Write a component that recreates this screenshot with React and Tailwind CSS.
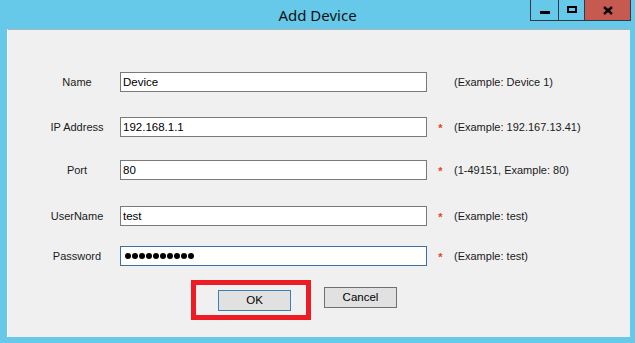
import React from 'react';

const fields = [
  { label: 'Name', value: 'Device', hint: '(Example: Device 1)', required: false, mt: 'mt-[42px]' },
  { label: 'IP Address', value: '192.168.1.1', hint: '(Example: 192.167.13.41)', required: true, mt: 'mt-[25px]' },
  { label: 'Port', value: '80', hint: '(1-49151, Example: 80)', required: true, mt: 'mt-[23px]' },
  { label: 'UserName', value: 'test', hint: '(Example: test)', required: true, mt: 'mt-[26px]' },
];

const Row = ({ label, required, hint, mt, children }) => (
  <div className={`flex items-center h-[20px] ${mt}`}>
    <div className="w-[86px] text-center text-[11px] text-[#1a1a1a]">{label}</div>
    {children}
    <div className="w-[27px] text-center text-[11px] text-[#e8401c] font-bold leading-none pt-[3px]">
      {required ? '*' : ''}
    </div>
    <div className="text-[11px] text-[#1a1a1a]">{hint}</div>
  </div>
);

const App = () => {
  return (
    <div
      className="w-[635px] h-[343px] bg-[#66c9ea] flex flex-col overflow-hidden"
      style={{ fontFamily: '"Liberation Sans", Arial, sans-serif' }}
    >
      {/* title bar */}
      <div className="h-[29px] grid grid-cols-[1fr_auto_1fr]">
        <div />
        <div
          className="text-[15px] text-[#111] leading-[29px] pt-[1px]"
          style={{ fontFamily: '"Noto Sans", sans-serif' }}
        >
          Add Device
        </div>
        <div className="flex justify-end items-start pr-[4px]">
          <div className="flex h-[21px] border border-t-0 border-[#2f3b47]">
            <button className="w-[27px] h-full flex items-center justify-center pt-[5px]">
              <span className="block w-[10px] h-[3px] bg-black" />
            </button>
            <button className="w-[26px] h-full border-l border-[#2f3b47] flex items-center justify-center pb-[1px]">
              <span className="block w-[10px] h-[7px] border-2 border-black" />
            </button>
            <button className="w-[46px] h-full border-l border-[#2f3b47] bg-[#c75a50] flex items-center justify-center">
              <svg width="10" height="9" viewBox="0 0 10 9">
                <path d="M1 1 L9 8 M9 1 L1 8" stroke="black" strokeWidth="2.4" />
              </svg>
            </button>
          </div>
        </div>
      </div>

      {/* form panel */}
      <div className="ml-[7px] mr-[5px] h-[308px] bg-[#f0f0f0] border-t border-[#a8b4bc] border-l border-l-white pl-[26px] flex flex-col">
        {fields.map((f) => (
          <Row key={f.label} {...f}>
            <input
              readOnly
              defaultValue={f.value}
              className="w-[307px] h-[20px] bg-white border border-[#7a7a7a] px-[2px] text-[11.5px] text-black outline-none"
            />
          </Row>
        ))}
        <Row label="Password" required hint="(Example: test)" mt="mt-[20px]">
          <div className="w-[307px] h-[20px] bg-white border border-[#3d6f9e] pl-[4px] flex items-center gap-[1px]">
            {Array.from({ length: 10 }).map((_, i) => (
              <span key={i} className="block w-[6px] h-[6px] rounded-full bg-black" />
            ))}
          </div>
        </Row>

        <div className="flex items-start mt-[14px] ml-[157px]">
          <div className="border-[5px] border-[#ed1c24] pl-[22px] pr-[15px] pt-[2px] pb-[4px]">
            <button className="w-[73px] h-[21px] bg-[#e1e1e1] border border-[#3c7fb1] text-[11.5px] text-black">
              OK
            </button>
          </div>
          <button className="ml-[13px] mt-[7px] w-[73px] h-[21px] bg-[#e1e1e1] border border-[#707070] text-[11.5px] text-black">
            Cancel
          </button>
        </div>
      </div>
    </div>
  );
};

export default App;
